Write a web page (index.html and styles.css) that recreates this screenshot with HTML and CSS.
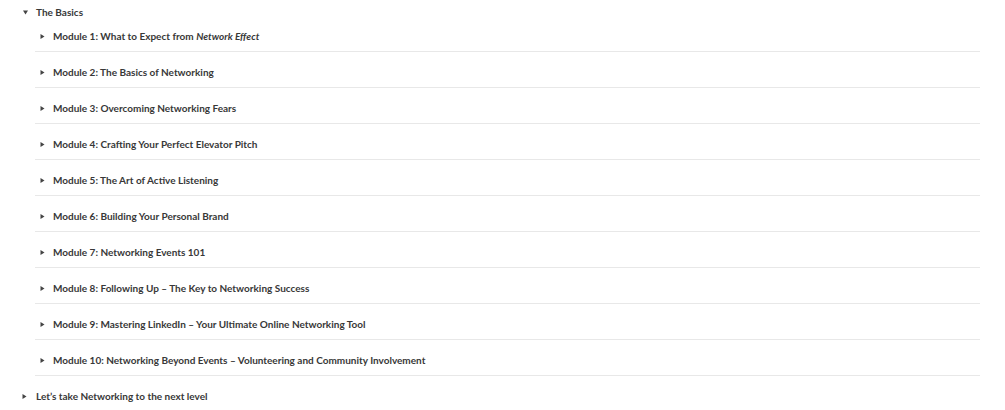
FILE: index.html
```html
<!DOCTYPE html>
<html>
<head>
<meta charset="utf-8">
<link rel="stylesheet" href="styles.css">
</head>
<body>
<div class="outline">
  <div class="section">
    <div class="head">
      <svg class="tri down" viewBox="0 0 5 5" width="5" height="5"><path d="M0 0.5 L5 0.5 L2.5 4.5 Z"/></svg>
      <span>The Basics</span>
    </div>
    <div class="modules">
      <div class="row"><svg class="tri" viewBox="0 0 5 5" width="5" height="5"><path d="M0.5 0 L4.5 2.5 L0.5 5 Z"/></svg><span>Module 1: What to Expect from <em>Network Effect</em></span></div>
      <div class="row"><svg class="tri" viewBox="0 0 5 5" width="5" height="5"><path d="M0.5 0 L4.5 2.5 L0.5 5 Z"/></svg><span>Module 2: The Basics of Networking</span></div>
      <div class="row"><svg class="tri" viewBox="0 0 5 5" width="5" height="5"><path d="M0.5 0 L4.5 2.5 L0.5 5 Z"/></svg><span>Module 3: Overcoming Networking Fears</span></div>
      <div class="row"><svg class="tri" viewBox="0 0 5 5" width="5" height="5"><path d="M0.5 0 L4.5 2.5 L0.5 5 Z"/></svg><span>Module 4: Crafting Your Perfect Elevator Pitch</span></div>
      <div class="row"><svg class="tri" viewBox="0 0 5 5" width="5" height="5"><path d="M0.5 0 L4.5 2.5 L0.5 5 Z"/></svg><span>Module 5: The Art of Active Listening</span></div>
      <div class="row"><svg class="tri" viewBox="0 0 5 5" width="5" height="5"><path d="M0.5 0 L4.5 2.5 L0.5 5 Z"/></svg><span>Module 6: Building Your Personal Brand</span></div>
      <div class="row"><svg class="tri" viewBox="0 0 5 5" width="5" height="5"><path d="M0.5 0 L4.5 2.5 L0.5 5 Z"/></svg><span>Module 7: Networking Events 101</span></div>
      <div class="row"><svg class="tri" viewBox="0 0 5 5" width="5" height="5"><path d="M0.5 0 L4.5 2.5 L0.5 5 Z"/></svg><span>Module 8: Following Up – The Key to Networking Success</span></div>
      <div class="row"><svg class="tri" viewBox="0 0 5 5" width="5" height="5"><path d="M0.5 0 L4.5 2.5 L0.5 5 Z"/></svg><span>Module 9: Mastering LinkedIn – Your Ultimate Online Networking Tool</span></div>
      <div class="row"><svg class="tri" viewBox="0 0 5 5" width="5" height="5"><path d="M0.5 0 L4.5 2.5 L0.5 5 Z"/></svg><span>Module 10: Networking Beyond Events – Volunteering and Community Involvement</span></div>
    </div>
  </div>
  <div class="section">
    <div class="head last">
      <svg class="tri" viewBox="0 0 5 5" width="5" height="5"><path d="M0.5 0 L4.5 2.5 L0.5 5 Z"/></svg>
      <span>Let’s take Networking to the next level</span>
    </div>
  </div>
</div>
</body>
</html>
```

FILE: styles.css
```css
html, body {
  margin: 0;
  padding: 0;
  background: #fff;
}
body {
  font-family: Lato, "Open Sans", sans-serif;
  font-size: 10px;
  font-weight: 700;
  color: #383838;
}
.outline {
  padding: 0 25px 0 23px;
}
.head {
  display: flex;
  align-items: center;
  gap: 8px;
  padding-top: 4px;
  line-height: 16px;
}
.head.last {
  padding-top: 12px;
  margin-left: -1px;
}
.head.last .tri {
  margin-right: 1px;
}
.modules {
  margin: -4px 0 0 12px;
}
.row {
  display: flex;
  align-items: center;
  gap: 8px;
  padding: 12px 0 7px 5px;
  line-height: 16px;
  border-bottom: 1px solid #e8e8e8;
}
.tri {
  flex: none;
  fill: #444;
}
em {
  font-style: italic;
}
```
